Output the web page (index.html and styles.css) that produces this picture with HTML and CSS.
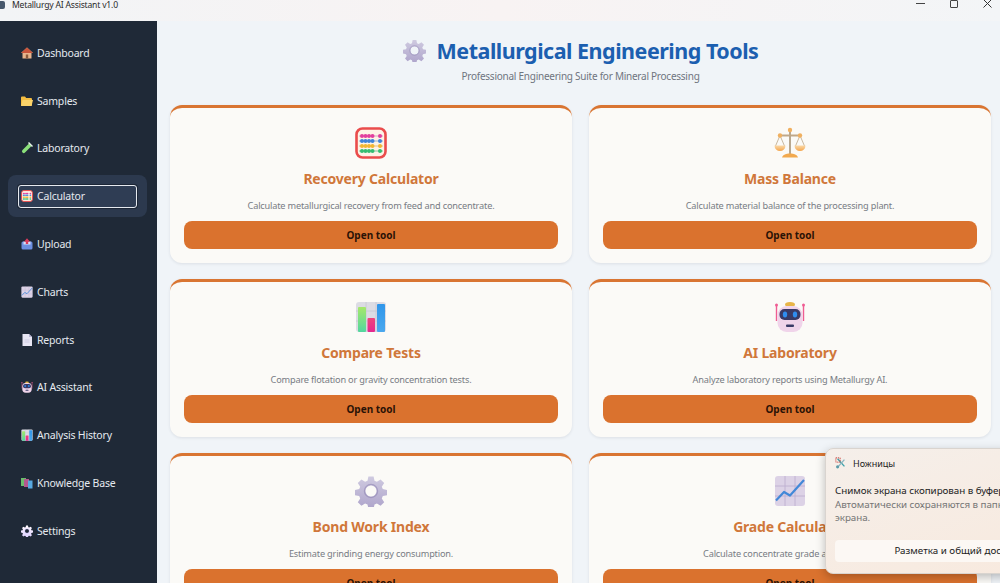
FILE: index.html
```html
<!DOCTYPE html>
<html lang="en">
<head>
    <meta charset="UTF-8">
    <meta name="viewport" content="width=device-width, initial-scale=1.0">
    <title>Metallurgy AI Assistant v1.0</title>
    <link rel="stylesheet" href="styles.css">
</head>
<body>

    <!-- Icon set -->
    <svg class="icon-defs" aria-hidden="true">
        <defs>
            <linearGradient id="gearFill" x1="0" y1="0" x2="0" y2="1">
                <stop offset="0" stop-color="#cfcae0"/>
                <stop offset="1" stop-color="#aea4cb"/>
            </linearGradient>
            <linearGradient id="panFill" x1="0" y1="0" x2="0" y2="1">
                <stop offset="0" stop-color="#fbd9a8"/>
                <stop offset="1" stop-color="#f4a64e"/>
            </linearGradient>
            <linearGradient id="greenBar" x1="0" y1="0" x2="0" y2="1">
                <stop offset="0" stop-color="#a6e86a"/>
                <stop offset="1" stop-color="#52d6a0"/>
            </linearGradient>
            <linearGradient id="pinkBar" x1="0" y1="0" x2="0" y2="1">
                <stop offset="0" stop-color="#f0447c"/>
                <stop offset="1" stop-color="#e4288f"/>
            </linearGradient>
            <linearGradient id="blueBar" x1="0" y1="0" x2="0" y2="1">
                <stop offset="0" stop-color="#2f96ea"/>
                <stop offset="1" stop-color="#4aa8ee"/>
            </linearGradient>
        </defs>

        <symbol id="i-gear" viewBox="0 0 32 32">
            <path fill="url(#gearFill)" fill-rule="evenodd" d="M13.4 1.5h5.2l.9 4.3 2.4 1 3.7-2.4 3.6 3.6-2.4 3.7 1 2.4 4.3.9v5.2l-4.3.9-1 2.4 2.4 3.7-3.6 3.6-3.7-2.4-2.4 1-.9 4.3h-5.2l-.9-4.3-2.4-1-3.7 2.4-3.6-3.6 2.4-3.7-1-2.4-4.3-.9v-5.2l4.3-.9 1-2.4-2.4-3.7 3.6-3.6 3.7 2.4 2.4-1zM16 10.5a5.5 5.5 0 1 0 0 11 5.5 5.5 0 0 0 0-11z"/>
            <circle cx="16" cy="16" r="6.6" fill="none" stroke="#8f86b3" stroke-width="1.2" opacity=".6"/>
        </symbol>

        <symbol id="i-abacus" viewBox="0 0 32 32">
            <rect x="1.5" y="1.5" width="29" height="29" rx="6" fill="#fdf3e6" stroke="#ea4c4c" stroke-width="2.6"/>
            <g stroke-width="1">
                <path stroke="#d8a0c0" d="M4 9h24"/><path stroke="#90b0d8" d="M4 14h24"/>
                <path stroke="#e0c080" d="M4 19h24"/><path stroke="#80c8a0" d="M4 24h24"/>
            </g>
            <g fill="#e23f9d"><circle cx="7" cy="9" r="2"/><circle cx="10.500" cy="9" r="2"/><circle cx="14" cy="9" r="2"/><circle cx="17.500" cy="9" r="2"/><circle cx="25" cy="9" r="2"/></g>
            <g fill="#3f83d8"><circle cx="7" cy="14" r="2"/><circle cx="10.500" cy="14" r="2"/><circle cx="14" cy="14" r="2"/><circle cx="17.500" cy="14" r="2"/><circle cx="25" cy="14" r="2"/></g>
            <g fill="#f2b632"><circle cx="7" cy="19" r="2"/><circle cx="10.500" cy="19" r="2"/><circle cx="14" cy="19" r="2"/><circle cx="17.500" cy="19" r="2"/><circle cx="25" cy="19" r="2"/></g>
            <g fill="#35bd72"><circle cx="7" cy="24" r="2"/><circle cx="10.500" cy="24" r="2"/><circle cx="14" cy="24" r="2"/><circle cx="17.500" cy="24" r="2"/><circle cx="25" cy="24" r="2"/></g>
        </symbol>

        <symbol id="i-scales" viewBox="0 0 32 32">
            <path d="M16 3v24" stroke="#b8a890" stroke-width="2"/>
            <path d="M6 8.500h20" stroke="#c0a888" stroke-width="2"/>
            <path d="M6 8.500 1.500 19M6 8.500 10.500 19M26 8.500 21.500 19M26 8.500 30.500 19" stroke="#c8b8a0" stroke-width="1" fill="none"/>
            <circle cx="16" cy="3" r="2.200" fill="#f0b060"/>
            <circle cx="6" cy="8.500" r="2.200" fill="#f0b060"/>
            <circle cx="26" cy="8.500" r="2.200" fill="#f0b060"/>
            <path d="M.5 18.500h11a5.500 5.500 0 0 1-11 0zM20.500 18.500h11a5.500 5.500 0 0 1-11 0z" fill="url(#panFill)"/>
            <path d="M8 30.500c1-3 4-4 8-4s7 1 8 4z" fill="#f2a94e"/>
        </symbol>

        <symbol id="i-bars" viewBox="0 0 32 32">
            <rect x="1" y="1" width="30" height="30" rx="3" fill="#dcdce4"/>
            <path d="M1 10h30M1 20h30M11 1v30M21 1v30" stroke="#c6c6d2" stroke-width=".8"/>
            <rect x="3" y="6" width="8" height="25" rx="1" fill="url(#greenBar)"/>
            <rect x="12.500" y="17" width="7.500" height="14" rx="1" fill="url(#pinkBar)"/>
            <rect x="22" y="3" width="8" height="28" rx="1" fill="url(#blueBar)"/>
        </symbol>

        <symbol id="i-robot" viewBox="0 0 32 32">
            <path d="M2.500 5v15M29.500 5v15" stroke="#ef5c93" stroke-width="1.400"/>
            <circle cx="2.500" cy="4" r="1.500" fill="#ef5c93"/>
            <circle cx="29.500" cy="4" r="1.500" fill="#ef5c93"/>
            <ellipse cx="16" cy="3.500" rx="5" ry="2.500" fill="#e8b548"/>
            <rect x="3.500" y="5" width="25" height="26" rx="9" fill="#f0d4ea"/>
            <rect x="5.500" y="8" width="21" height="11" rx="5" fill="#3a3a66"/>
            <ellipse cx="11" cy="13.500" rx="2.200" ry="3" fill="#2f8df0"/>
            <ellipse cx="21" cy="13.500" rx="2.200" ry="3" fill="#2f8df0"/>
            <rect x="12" y="23.500" width="8" height="2.500" rx="1" fill="#3a3a66"/>
        </symbol>

        <symbol id="i-trend" viewBox="0 0 32 32">
            <rect x="1" y="1" width="30" height="30" rx="3" fill="#dcd2e6"/>
            <path d="M1 11h30M1 21h30M11 1v30M21 1v30" stroke="#bdb0d0" stroke-width=".9"/>
            <path d="M2 25.500 10 17l6 3.500L30 5" fill="none" stroke="#4288d8" stroke-width="2.200" stroke-linejoin="round"/>
        </symbol>

        <symbol id="i-house" viewBox="0 0 12 12">
            <path d="M6 .500 0 6h1.500v5.500h9V6H12z" fill="#e8b48c"/>
            <path d="M6 .500 0 6h12z" fill="#c9553c"/>
            <rect x="4.800" y="7.500" width="2.400" height="4" fill="#8a5a3c"/>
        </symbol>
        <symbol id="i-folder" viewBox="0 0 12 12">
            <path d="M0 2.500a1 1 0 0 1 1-1h3l1.200 1.500H10a1 1 0 0 1 1 1V10a1 1 0 0 1-1 1H1a1 1 0 0 1-1-1z" fill="#f4bd42"/>
            <path d="M1.500 5H12l-1.500 6H0z" fill="#fbd36a"/>
        </symbol>
        <symbol id="i-tube" viewBox="0 0 12 12">
            <path d="M8 1.500 10.500 4 4 10.500a1.700 1.700 0 0 1-2.500-2.500z" fill="#8be07a"/>
            <path d="M7.500.500l4 4" stroke="#e8f4ea" stroke-width="1.400"/>
        </symbol>
        <symbol id="i-inbox" viewBox="0 0 12 12">
            <rect x=".500" y="3.500" width="11" height="8" rx="1.500" fill="#6c8fe0"/>
            <rect x="2.500" y="3.500" width="7" height="3" fill="#d6def5"/>
            <path d="M6 .200 9 3.800H7.200V6H4.800V3.800H3z" fill="#d83a5c"/>
        </symbol>
        <symbol id="i-page" viewBox="0 0 12 12">
            <path d="M1.500 0H8l3 3v9H1.500z" fill="#e8e6f4"/>
            <path d="M8 0l3 3H8z" fill="#b9b6d4"/>
            <path d="M3.500 6h5M3.500 8h5" stroke="#c3c0da" stroke-width=".7"/>
        </symbol>
        <symbol id="i-books" viewBox="0 0 12 12">
            <rect x="0" y="1" width="5" height="8" fill="#6cbc6c"/>
            <rect x="3" y="2" width="5" height="8" fill="#b4588e"/>
            <rect x="7" y="3.500" width="4.500" height="8" fill="#58a8e0"/>
        </symbol>

        <symbol id="i-scissors" viewBox="0 0 14 14">
            <path d="M3 2 11 11" stroke="#3aa0a8" stroke-width="1.500"/>
            <path d="M11 3 4 11" stroke="#8ab4c0" stroke-width="1.500"/>
            <circle cx="3" cy="11.500" r="1.800" fill="#5a9aa8"/>
            <path d="M1 1h5v5H1z" fill="none" stroke="#c8403c" stroke-width="1.100" stroke-dasharray="1.400 1"/>
        </symbol>
    </svg>

    <!-- Title bar -->
    <header class="titlebar">
        <div class="app-name">
            <span class="app-icon"></span>
            <span>Metallurgy AI Assistant v1.0</span>
        </div>
        <div class="window-controls">
            <span class="win-min"></span>
            <span class="win-max"></span>
            <svg class="win-close" viewBox="0 0 9 9"><path d="M.5.500l8 8M8.500.500l-8 8" stroke="#333" stroke-width="1"/></svg>
        </div>
    </header>

    <div class="app">
        <!-- Sidebar -->
        <nav class="sidebar">
            <div class="nav-item"><svg class="nav-icon"><use href="#i-house"/></svg>Dashboard</div>
            <div class="nav-item"><svg class="nav-icon"><use href="#i-folder"/></svg>Samples</div>
            <div class="nav-item"><svg class="nav-icon"><use href="#i-tube"/></svg>Laboratory</div>
            <div class="nav-item active"><div class="nav-focus"><svg class="nav-icon"><use href="#i-abacus"/></svg>Calculator</div></div>
            <div class="nav-item"><svg class="nav-icon"><use href="#i-inbox"/></svg>Upload</div>
            <div class="nav-item"><svg class="nav-icon"><use href="#i-trend"/></svg>Charts</div>
            <div class="nav-item"><svg class="nav-icon"><use href="#i-page"/></svg>Reports</div>
            <div class="nav-item"><svg class="nav-icon"><use href="#i-robot"/></svg>AI Assistant</div>
            <div class="nav-item"><svg class="nav-icon"><use href="#i-bars"/></svg>Analysis History</div>
            <div class="nav-item"><svg class="nav-icon"><use href="#i-books"/></svg>Knowledge Base</div>
            <div class="nav-item"><svg class="nav-icon gear-light"><use href="#i-gear"/></svg>Settings</div>
        </nav>

        <!-- Main content -->
        <main class="content">
            <div class="page-head">
                <h1><svg class="head-icon"><use href="#i-gear"/></svg>Metallurgical Engineering Tools</h1>
                <p>Professional Engineering Suite for Mineral Processing</p>
            </div>

            <div class="tools">
                <div class="card">
                    <svg class="card-icon"><use href="#i-abacus"/></svg>
                    <h3>Recovery Calculator</h3>
                    <p>Calculate metallurgical recovery from feed and concentrate.</p>
                    <button class="open-button">Open tool</button>
                </div>
                <div class="card">
                    <svg class="card-icon"><use href="#i-scales"/></svg>
                    <h3>Mass Balance</h3>
                    <p>Calculate material balance of the processing plant.</p>
                    <button class="open-button">Open tool</button>
                </div>
                <div class="card">
                    <svg class="card-icon"><use href="#i-bars"/></svg>
                    <h3>Compare Tests</h3>
                    <p>Compare flotation or gravity concentration tests.</p>
                    <button class="open-button">Open tool</button>
                </div>
                <div class="card">
                    <svg class="card-icon"><use href="#i-robot"/></svg>
                    <h3>AI Laboratory</h3>
                    <p>Analyze laboratory reports using Metallurgy AI.</p>
                    <button class="open-button">Open tool</button>
                </div>
                <div class="card">
                    <svg class="card-icon"><use href="#i-gear"/></svg>
                    <h3>Bond Work Index</h3>
                    <p>Estimate grinding energy consumption.</p>
                    <button class="open-button">Open tool</button>
                </div>
                <div class="card">
                    <svg class="card-icon"><use href="#i-trend"/></svg>
                    <h3>Grade Calculator</h3>
                    <p>Calculate concentrate grade and recovery.</p>
                    <button class="open-button">Open tool</button>
                </div>
            </div>
        </main>
    </div>

    <!-- Snipping tool notification -->
    <aside class="toast">
        <div class="toast-app"><svg class="toast-icon"><use href="#i-scissors"/></svg>Ножницы</div>
        <div class="toast-title">Снимок экрана скопирован в буфер обмена</div>
        <div class="toast-text">Автоматически сохраняются в папку снимков экрана.</div>
        <div class="toast-button">Разметка и общий доступ</div>
    </aside>

</body>
</html>
```

FILE: styles.css
```css
* {
    box-sizing: border-box;
}
html, body {
    height: 100%;
}
body {
    font-family: "Noto Sans", "Open Sans", Arial, sans-serif;
    margin: 0;
    display: flex;
    flex-direction: column;
    overflow: hidden;
    background-color: #f0f4f8;
    color: #333;
    position: relative;
}
.icon-defs {
    position: absolute;
    width: 0;
    height: 0;
}

/* Title bar */
.titlebar {
    height: 21px;
    flex: none;
    display: flex;
    justify-content: space-between;
    align-items: flex-start;
    background: linear-gradient(90deg, #f2f4f6, #f8f3f3 50%, #f3f5f7);
}
.app-name {
    display: flex;
    align-items: center;
    gap: 7px;
    height: 9px;
    font-size: 8.6px;
    letter-spacing: -0.2px;
    color: #2a2a2a;
}
.app-icon {
    width: 5px;
    height: 8px;
    border-radius: 0 2px 2px 0;
    background: #47586c;
}
.window-controls {
    display: flex;
    align-items: center;
    gap: 25px;
    padding-right: 8px;
    height: 7px;
}
.win-min {
    width: 9px;
    height: 1px;
    background: #444;
}
.win-max {
    width: 8px;
    height: 8px;
    border: 1px solid #444;
    border-radius: 1px;
}
.win-close {
    width: 9px;
    height: 9px;
}

.app {
    flex: 1;
    display: flex;
    min-height: 0;
}

/* Sidebar */
.sidebar {
    width: 157px;
    flex: none;
    padding: 8px 10px 0 8px;
    background-color: #1f2937;
}
.nav-item {
    height: 47.8px;
    padding-left: 13px;
    display: flex;
    align-items: center;
    font-size: 10.5px;
    letter-spacing: -0.2px;
    color: #e5e9ef;
}
.nav-item.active {
    height: 42px;
    margin: 2.9px 0;
    padding: 0 10px;
    background-color: #2c394e;
    border-radius: 8px;
}
.nav-focus {
    flex: 1;
    height: 23px;
    padding-left: 2px;
    display: flex;
    align-items: center;
    border: 1px solid #e6eaf0;
    border-radius: 3px;
    background-color: #2f3d54;
    box-shadow: 0 0 0 1px #1c2636;
}
.nav-icon {
    width: 12px;
    height: 12px;
    margin-right: 4px;
    flex: none;
}
.gear-light {
    filter: brightness(1.25);
}

/* Main */
.content {
    flex: 1;
    min-width: 0;
    padding: 0 9px 0 13px;
    overflow: hidden;
}
.page-head {
    height: 84px;
    padding-top: 13px;
    text-align: center;
}
.page-head h1 {
    margin: 0;
    display: flex;
    justify-content: center;
    align-items: center;
    gap: 11px;
    height: 32px;
    font-size: 21.5px;
    letter-spacing: -0.5px;
    font-weight: 700;
    color: #1c5fb0;
}
.head-icon {
    width: 23px;
    height: 23px;
    flex: none;
}
.page-head p {
    margin: 3px 0 0;
    font-size: 10px;
    letter-spacing: -0.25px;
    color: #6f7580;
}
.tools {
    display: grid;
    grid-template-columns: 402px 402px;
    column-gap: 17px;
    row-gap: 16px;
}
.card {
    height: 158px;
    padding: 19px 14px 14px;
    display: flex;
    flex-direction: column;
    align-items: center;
    background-color: #fbfaf7;
    border-top: 3px solid #d97532;
    border-radius: 12px;
    box-shadow: 0 1px 3px rgba(40, 50, 70, 0.1);
}
.card-icon {
    width: 32px;
    height: 32px;
    flex: none;
}
.card h3 {
    margin: 9px 0 0;
    height: 22px;
    line-height: 22px;
    font-size: 14px;
    letter-spacing: -0.2px;
    font-weight: 700;
    color: #d0773a;
}
.card p {
    margin: 8px 0 0;
    height: 16px;
    line-height: 16px;
    font-size: 9.2px;
    letter-spacing: -0.18px;
    color: #787c84;
}
.open-button {
    margin-top: auto;
    width: 100%;
    height: 28px;
    flex: none;
    font-family: inherit;
    font-size: 10px;
    font-weight: 700;
    color: #2a1206;
    background-color: #da722e;
    border: none;
    border-radius: 8px;
    cursor: pointer;
}

/* Notification lies over the page */
.toast {
    position: absolute;
    left: 825px;
    top: 448px;
    width: 262px;
    height: 126px;
    padding: 7px 10px 10px 9px;
    background: linear-gradient(160deg, #f5efea, #f8e9dd);
    border: 1px solid #d9d4cf;
    border-radius: 8px;
    box-shadow: 0 3px 10px rgba(0, 0, 0, 0.25);
    color: #222;
}
.toast-app {
    display: flex;
    align-items: center;
    gap: 6px;
    font-size: 9px;
    height: 14px;
}
.toast-icon {
    width: 12px;
    height: 12px;
}
.toast-title {
    margin-top: 14px;
    font-size: 9.8px;
    letter-spacing: -0.05px;
    line-height: 14px;
    white-space: nowrap;
}
.toast-text {
    font-size: 9.8px;
    letter-spacing: -0.05px;
    line-height: 13px;
    color: #757575;
}
.toast-button {
    margin-top: 16px;
    height: 22px;
    line-height: 22px;
    text-align: center;
    font-size: 9.8px;
    background-color: #fcf8f4;
    border-radius: 4px;
}
```
